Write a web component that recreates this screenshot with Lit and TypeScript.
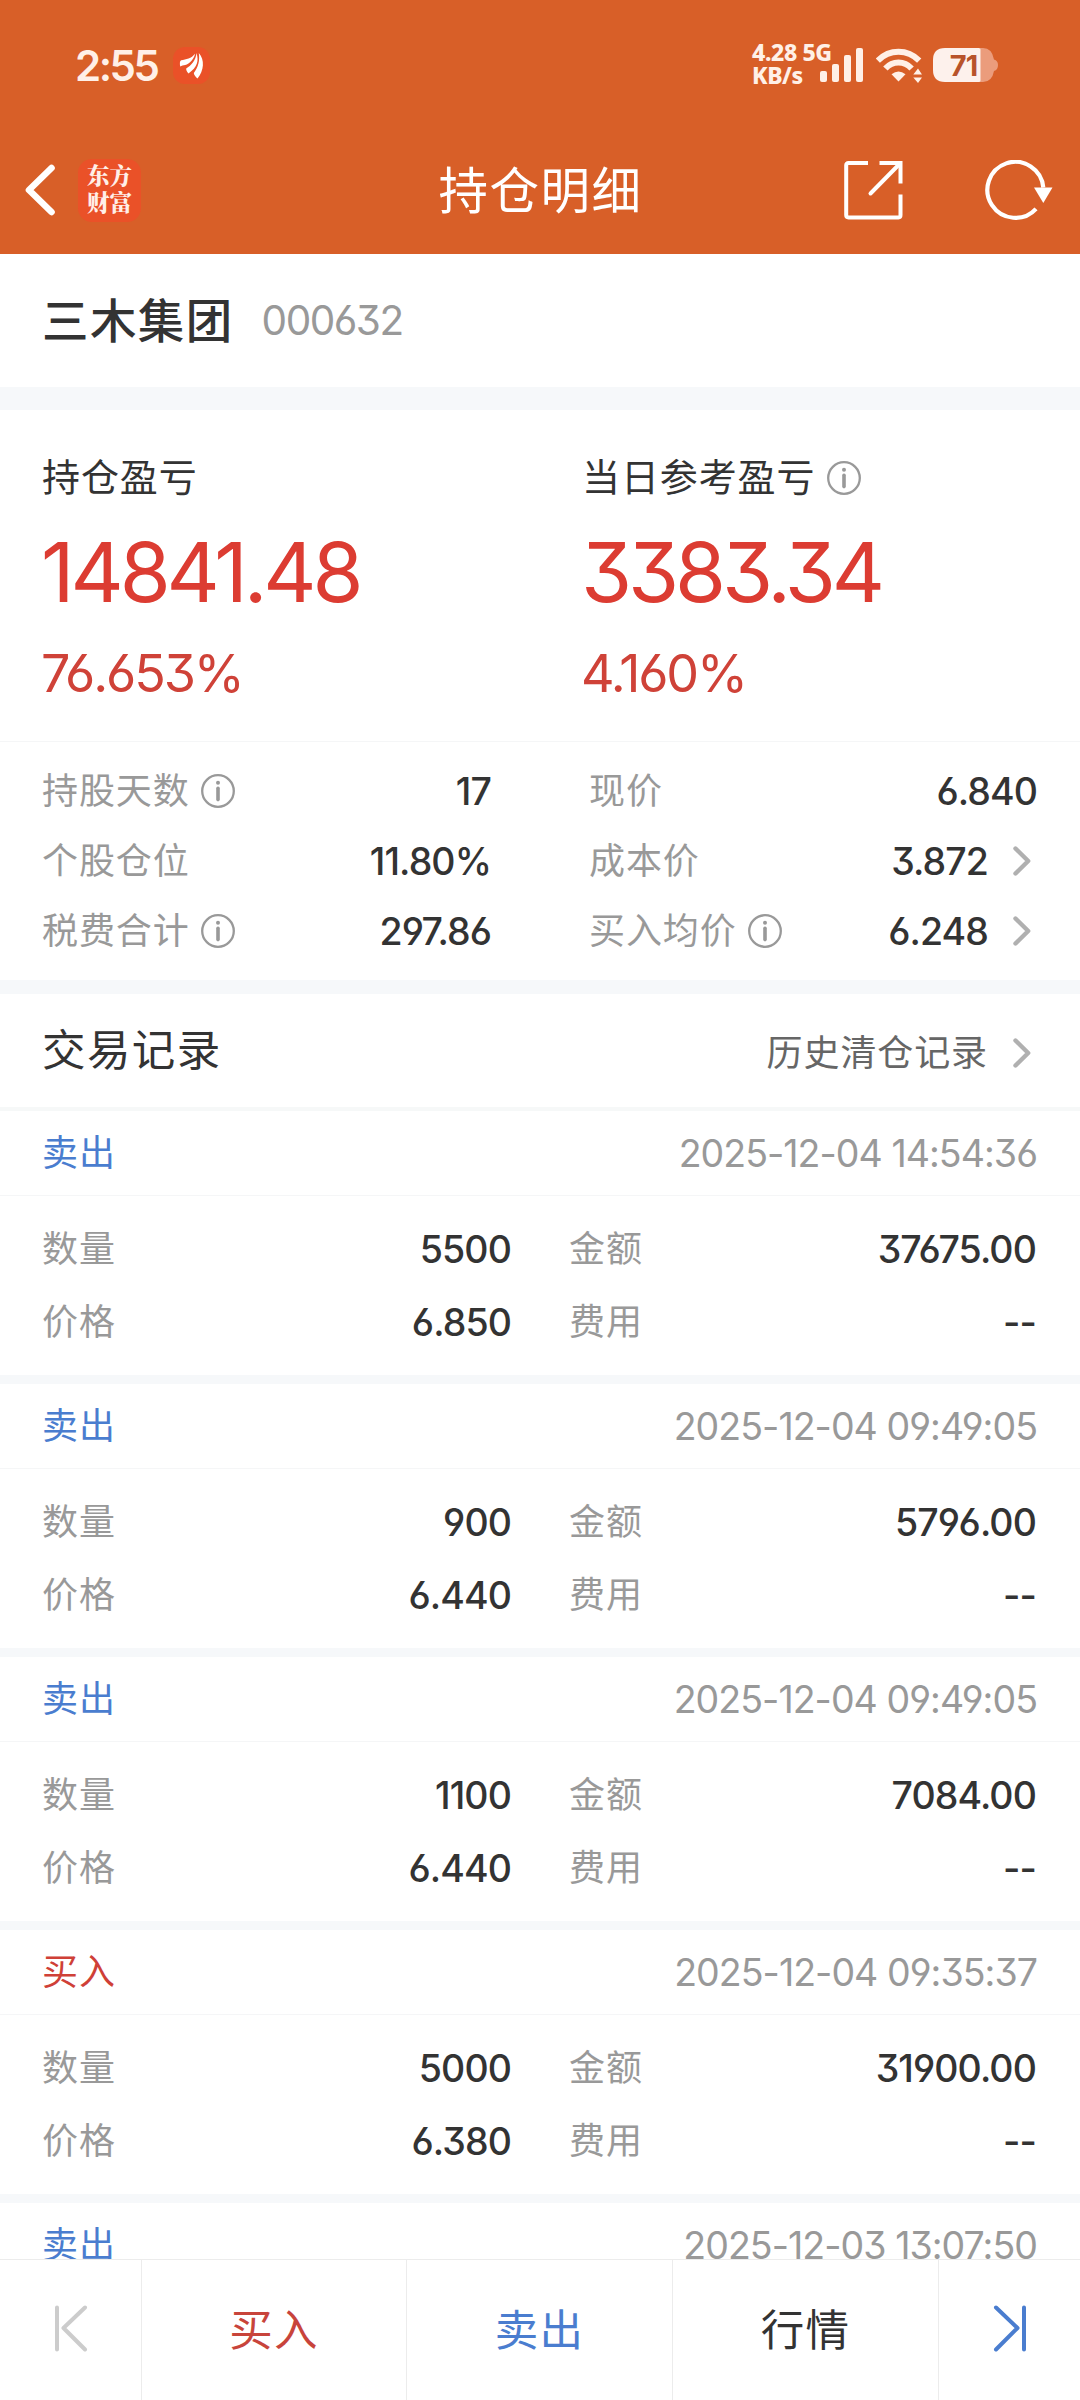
import { LitElement, html, svg, css } from "lit";
import { customElement, property } from "lit/decorators.js";

interface TradeRecord {
  side: "buy" | "sell";
  time: string;
  qty: string;
  amount: string;
  price: string;
  fee: string;
}

const RECORDS: TradeRecord[] = [
  { side: "sell", time: "2025-12-04 14:54:36", qty: "5500", amount: "37675.00", price: "6.850", fee: "--" },
  { side: "sell", time: "2025-12-04 09:49:05", qty: "900", amount: "5796.00", price: "6.440", fee: "--" },
  { side: "sell", time: "2025-12-04 09:49:05", qty: "1100", amount: "7084.00", price: "6.440", fee: "--" },
  { side: "buy", time: "2025-12-04 09:35:37", qty: "5000", amount: "31900.00", price: "6.380", fee: "--" },
  { side: "sell", time: "2025-12-03 13:07:50", qty: "", amount: "", price: "", fee: "" },
];

const SIDE_TEXT = { buy: "买入", sell: "卖出" };

const infoIcon = html`<svg class="info" width="34" height="34" viewBox="0 0 34 34" fill="none">
  <circle cx="17" cy="17" r="15.8" stroke="#999" stroke-width="2.3" />
  <circle cx="17" cy="8.8" r="2" fill="#999" />
  <path d="M17 14.2V25.6" stroke="#999" stroke-width="3.6" stroke-linecap="round" />
</svg>`;

const chevron = html`<svg class="chev" width="18" height="30" viewBox="0 0 18 30" fill="none">
  <path d="M2.5 2.5L15.2 15L2.5 27.5" stroke="#b0b0b0" stroke-width="4.4" stroke-linecap="round" stroke-linejoin="round" />
</svg>`;

const shared = css`
  * {
    box-sizing: border-box;
  }
  svg {
    display: block;
    flex: none;
  }
`;

@customElement("status-bar")
export class StatusBar extends LitElement {
  static styles = [
    shared,
    css`
      :host {
        display: flex;
        align-items: center;
        height: 130px;
        padding: 0 82px 0 75px;
        color: #fff0e7;
      }
      .time {
        font-size: 42px;
        font-weight: 600;
        letter-spacing: -2.5px;
        line-height: 48px;
        padding-top: 1px;
        width: 98px;
      }
      .spacer {
        flex: 1;
      }
      .speed {
        font-family: "Noto Sans", "Open Sans", sans-serif;
        font-size: 23px;
        font-weight: 800;
        line-height: 23px;
        letter-spacing: -0.4px;
        white-space: nowrap;
        width: 68px;
        margin-bottom: 3px;
      }
      .signal {
        margin-right: 13px;
      }
      .wifi {
        margin-right: 11px;
      }
      .battery {
        position: relative;
        width: 65px;
        height: 34px;
      }
      .level {
        position: absolute;
        left: 0;
        top: 0;
        width: 61px;
        line-height: 35px;
        text-align: center;
        font-size: 29px;
        font-weight: 700;
        letter-spacing: -1px;
        color: #b8532a;
      }
    `,
  ];

  render() {
    return html`
      <span class="time">2:55</span>
      <svg width="37" height="37" viewBox="0 0 37 37">
        <rect width="37" height="37" rx="12" fill="#ea5128" />
        <g fill="#fff">
          <path d="M7.2 19.5C6.6 16 6.8 13.6 8.2 13.2C13 12.6 18.5 11.5 22 6.8C21.6 11.5 16.5 17 12.2 18C10.3 18.4 8.6 18.5 7.2 19.5Z" />
          <path d="M15.5 26.5C14 25.2 13 23 13.2 21.6C18 18.5 22.8 13.5 23.5 6C26 14 24.5 20 15.5 26.5Z" />
          <path d="M24.5 31.5C22.5 30 21 27.8 20.8 26C25.2 20.5 27 13.5 25.8 6C32 12.5 31 24 24.5 31.5Z" />
        </g>
      </svg>
      <span class="spacer"></span>
      <div class="speed">4.28 5G<br />KB/s</div>
      <svg class="signal" width="43" height="34" viewBox="0 0 43 34" fill="#fff0e7">
        <rect x="0" y="23" width="7" height="11" rx="2" />
        <rect x="12" y="16" width="7" height="18" rx="2" />
        <rect x="24" y="7" width="7" height="27" rx="2" />
        <rect x="36" y="0" width="7" height="34" rx="2" />
      </svg>
      <svg class="wifi" width="46" height="35" viewBox="0 0 46 35" fill="none">
        <g stroke="#fff0e7" stroke-width="6">
          <path d="M1.8 12.6C13.5 0.8 31.5 0.8 43.2 12.6" />
          <path d="M9.4 20.6C16.7 12.6 28.3 12.6 35.6 20.6" />
        </g>
        <path d="M15.5 26.3Q22.5 20.5 29.5 26.3L22.5 33.6Z" fill="#fff0e7" />
        <path d="M37.3 26.5L42 20.5L46 26.5ZM37.3 29.5L42 35L46 29.5Z" fill="#fff0e7" />
      </svg>
      <div class="battery">
        <svg width="65" height="34" viewBox="0 0 65 34">
          <path d="M47 0H50Q59 0 61 11.5Q65 12.5 65 17Q65 22 61 23Q59 34 50 34H47Z" fill="#eb9c7c" />
          <path d="M12 0H46Q47.5 0 47.5 1.5V32.5Q47.5 34 46 34H12Q0 34 0 22V12Q0 0 12 0Z" fill="#fdf1ec" />
        </svg>
        <span class="level">71</span>
      </div>
    `;
  }
}

@customElement("nav-bar")
export class NavBar extends LitElement {
  static styles = [
    shared,
    css`
      :host {
        display: grid;
        grid-template-columns: 1fr auto 1fr;
        align-items: center;
        height: 120px;
        padding: 0 27px 0 23px;
        color: #fff;
      }
      .left {
        display: flex;
        align-items: center;
        gap: 22px;
      }
      .logo {
        width: 63px;
        height: 63px;
        border-radius: 14px;
        background: #ea5128;
        color: #ffefe8;
        font-family: "Noto Serif CJK SC", "Noto Sans CJK SC", sans-serif;
        font-size: 22.5px;
        font-weight: 900;
        line-height: 27px;
        padding-top: 2px;
        text-align: center;
      }
      .title {
        font-size: 49.5px;
        letter-spacing: 1.5px;
        line-height: 60px;
        margin-left: 5px;
        padding-top: 1px;
      }
      .right {
        display: flex;
        justify-content: flex-end;
        align-items: center;
        gap: 82px;
      }
    `,
  ];

  render() {
    return html`
      <div class="left">
        <svg width="33" height="54" viewBox="0 0 33 54" fill="none">
          <path d="M28.5 5L6 27L28.5 49" stroke="#fff" stroke-width="6.6" stroke-linecap="round" stroke-linejoin="round" />
        </svg>
        <div class="logo">东方<br />财富</div>
      </div>
      <div class="title">持仓明细</div>
      <div class="right">
        <svg width="59" height="60" viewBox="0 0 59 60" fill="none" stroke="#fff" stroke-width="4">
          <path d="M24 3H4.5Q2.2 3 2.2 5.3V55Q2.2 57.4 4.5 57.4H54.5Q56.5 57.4 56.5 55V34.5" />
          <path d="M35.5 3H56.5V23.5" />
          <path d="M55.5 4L26.5 33.5" stroke-linecap="round" />
        </svg>
        <svg width="68" height="60" viewBox="0 0 68 60" fill="none">
          <path d="M58.3 27.5A28 28 0 1 0 51 48.8" stroke="#fff" stroke-width="4.2" />
          <path d="M49 27.5H67.5L58.3 43Z" fill="#fff" />
        </svg>
      </div>
    `;
  }
}

@customElement("trade-record")
export class TradeRecordView extends LitElement {
  @property({ attribute: false }) record!: TradeRecord;

  static styles = [
    shared,
    css`
      :host {
        display: block;
        flex: none;
        height: 273px;
        border-bottom: 9px solid #f6f8fa;
        box-sizing: border-box;
      }
      .head {
        display: flex;
        justify-content: space-between;
        align-items: center;
        height: 85px;
        padding: 0 42px;
        border-bottom: 1px solid #f5f6f7;
        font-size: 36px;
      }
      .side {
        letter-spacing: 0.9px;
        padding-top: 2px;
      }
      .sell {
        color: #4a7dcf;
      }
      .buy {
        color: #cf4037;
      }
      .time {
        color: #999;
        font-size: 37.5px;
        letter-spacing: -0.95px;
        margin-right: 1px;
      }
      .body {
        display: grid;
        grid-template-columns: 469px 467px;
        column-gap: 58px;
        grid-auto-rows: 73px;
        padding: 16px 42px 0;
      }
      .cell {
        display: flex;
        justify-content: space-between;
        align-items: center;
      }
      .label {
        color: #999;
        font-size: 36px;
        letter-spacing: 0.9px;
        padding-top: 2px;
      }
      .value {
        color: #333;
        font-size: 37.5px;
        font-weight: 450;
        letter-spacing: -0.9px;
        padding-top: 1px;
      }
    `,
  ];

  private cell(label: string, value: string) {
    return html`<div class="cell"><span class="label">${label}</span><span class="value">${value}</span></div>`;
  }

  render() {
    const r = this.record;
    return html`
      <div class="head">
        <span class="side ${r.side}">${SIDE_TEXT[r.side]}</span>
        <span class="time">${r.time}</span>
      </div>
      ${r.qty
        ? html`<div class="body">
            ${this.cell("数量", r.qty)} ${this.cell("金额", r.amount)} ${this.cell("价格", r.price)}
            ${this.cell("费用", r.fee)}
          </div>`
        : ""}
    `;
  }
}

@customElement("app-root")
export class AppRoot extends LitElement {
  static styles = [
    shared,
    css`
      :host {
        display: flex;
        flex-direction: column;
        width: 1080px;
        height: 2400px;
        overflow: hidden;
        background: #fff;
        color: #333;
        font-family: Inter, "Noto Sans CJK SC", sans-serif;
        font-feature-settings: "cv03", "cv04", "cv09";
        line-height: 1.2;
        white-space: nowrap;
      }
      .top {
        flex: none;
        height: 254px;
        background: #d85f28;
      }
      .content {
        flex: 1;
        min-height: 0;
        display: flex;
        flex-direction: column;
        overflow: hidden;
      }
      .stock {
        flex: none;
        display: flex;
        align-items: center;
        gap: 28px;
        height: 156px;
        padding: 2px 42px 0;
        border-bottom: 23px solid #f6f8fa;
      }
      .name {
        font-size: 46.5px;
        letter-spacing: 1.4px;
        font-weight: 500;
      }
      .code {
        font-size: 40.5px;
        letter-spacing: -1.5px;
        color: #999;
      }
      .summary {
        flex: none;
        display: grid;
        grid-template-columns: 540px 1fr;
        height: 332px;
        padding: 38px 0 0 42px;
        border-bottom: 1px solid #f5f6f7;
      }
      .caption {
        display: flex;
        align-items: center;
        gap: 12px;
        height: 60px;
        font-size: 38px;
        letter-spacing: 0.9px;
      }
      .pnl {
        font-size: 82.5px;
        line-height: 100px;
        margin: 14px 0 0 -1px;
        letter-spacing: -4.1px;
        color: #dc3c32;
      }
      .pct {
        font-size: 52px;
        line-height: 64px;
        margin: 20px 0 0 -1px;
        letter-spacing: -2.1px;
        color: #cf4238;
      }
      .details {
        flex: none;
        display: grid;
        grid-template-columns: 449px 448px;
        column-gap: 98px;
        grid-auto-rows: 70px;
        height: 252px;
        padding: 14px 42px 0;
        border-bottom: 14px solid #f6f8fa;
      }
      .row {
        display: flex;
        align-items: center;
      }
      .label {
        color: #999;
        font-size: 36px;
        letter-spacing: 0.9px;
        margin-right: 11px;
        padding-top: 2px;
      }
      .value {
        margin-left: auto;
        font-size: 37.5px;
        font-weight: 450;
        letter-spacing: -0.9px;
      }
      .chev {
        margin: 0 6px 0 25px;
      }
      .records-head {
        flex: none;
        display: flex;
        align-items: center;
        height: 117px;
        padding: 0 42px;
        border-bottom: 4px solid #f6f8f8;
      }
      .records-title {
        font-size: 43.5px;
        letter-spacing: 1.4px;
      }
      .history {
        display: flex;
        align-items: center;
        margin: 0 1px 0 auto;
        padding-top: 5px;
        color: #666;
        font-size: 36px;
        letter-spacing: 0.9px;
      }
      .history-text {
        padding-top: 2px;
      }
      .actions {
        flex: none;
        display: grid;
        grid-template-columns: 142px 265px 266px 266px 141px;
        height: 141px;
        border-top: 1px solid #ececec;
        background: #fff;
        font-size: 43.5px;
        letter-spacing: 1.2px;
      }
      .action {
        display: flex;
        align-items: center;
        justify-content: center;
        border-right: 1px solid #ececec;
      }
      .action:last-child {
        border-right: 0;
      }
      .action svg {
        margin-bottom: 4px;
      }
      .buy {
        color: #c8443b;
      }
      .sell {
        color: #4a7dcf;
      }
    `,
  ];

  private row(label: string, value: string, info = false, link = false) {
    return html`<div class="row">
      <span class="label">${label}</span>${info ? infoIcon : ""}<span class="value">${value}</span>${link ? chevron : ""}
    </div>`;
  }

  private stepIcon(color: string, forward: boolean) {
    const shape = forward
      ? svg`<path d="M3 3.5L24.5 24L3 45.5M31 3.5V45.5" />`
      : svg`<path d="M31 3.5L9.5 24L31 45.5M3 3.5V45.5" />`;
    return html`<svg width="34" height="48" viewBox="0 0 34 48" fill="none" stroke=${color} stroke-width="4" stroke-linecap="round" stroke-linejoin="round">
      ${shape}
    </svg>`;
  }

  render() {
    return html`
      <div class="top">
        <status-bar></status-bar>
        <nav-bar></nav-bar>
      </div>
      <div class="content">
        <div class="stock"><span class="name">三木集团</span><span class="code">000632</span></div>
        <div class="summary">
          <div>
            <div class="caption">持仓盈亏</div>
            <div class="pnl">14841.48</div>
            <div class="pct">76.653%</div>
          </div>
          <div>
            <div class="caption">当日参考盈亏${infoIcon}</div>
            <div class="pnl">3383.34</div>
            <div class="pct">4.160%</div>
          </div>
        </div>
        <div class="details">
          ${this.row("持股天数", "17", true)} ${this.row("现价", "6.840")} ${this.row("个股仓位", "11.80%")}
          ${this.row("成本价", "3.872", false, true)} ${this.row("税费合计", "297.86", true)}
          ${this.row("买入均价", "6.248", true, true)}
        </div>
        <div class="records-head">
          <span class="records-title">交易记录</span>
          <span class="history"><span class="history-text">历史清仓记录</span>${chevron}</span>
        </div>
        ${RECORDS.map((r) => html`<trade-record .record=${r}></trade-record>`)}
      </div>
      <div class="actions">
        <div class="action">${this.stepIcon("#ccc", false)}</div>
        <div class="action buy">买入</div>
        <div class="action sell">卖出</div>
        <div class="action">行情</div>
        <div class="action">${this.stepIcon("#4a7dcf", true)}</div>
      </div>
    `;
  }
}
